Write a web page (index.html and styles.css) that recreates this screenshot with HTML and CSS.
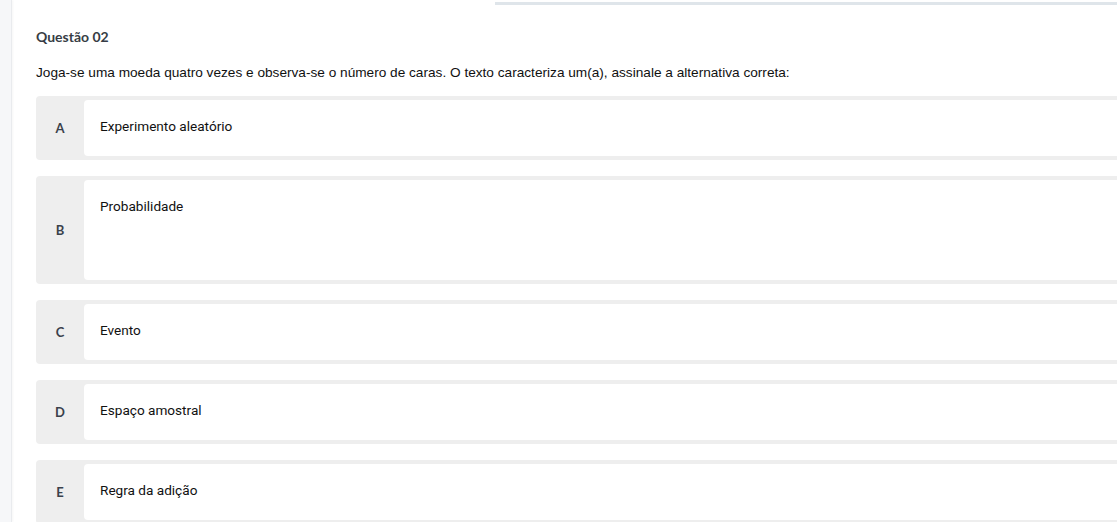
FILE: index.html
```html
<!DOCTYPE html>
<html lang="pt-BR">
<head>
<meta charset="utf-8">
<link rel="stylesheet" href="styles.css">
<title>Questão 02</title>
</head>
<body>
<div class="page">
  <aside class="rail"></aside>
  <main class="main">
    <div class="topbar"></div>
    <section class="question">
      <h2 class="q-title">Questão 02</h2>
      <p class="q-text">Joga-se uma moeda quatro vezes e observa-se o número de caras. O texto caracteriza um(a), assinale a alternativa correta:</p>
      <ul class="options">
        <li class="option"><span class="letter">A</span><div class="answer">Experimento aleatório</div></li>
        <li class="option"><span class="letter">B</span><div class="answer answer-tall">Probabilidade</div></li>
        <li class="option"><span class="letter">C</span><div class="answer">Evento</div></li>
        <li class="option"><span class="letter">D</span><div class="answer">Espaço amostral</div></li>
        <li class="option"><span class="letter">E</span><div class="answer">Regra da adição</div></li>
      </ul>
    </section>
  </main>
</div>
</body>
</html>
```

FILE: styles.css
```css
html, body {
  margin: 0;
  padding: 0;
  background: #ffffff;
  overflow: hidden;
  height: 522px;
}

.page {
  display: flex;
  height: 522px;
}

.rail {
  flex: 0 0 11px;
  background: #f6f7f9;
  border-right: 1px solid #e9ebee;
  box-shadow: 1px 0 2px rgba(0, 0, 0, 0.04);
}

.main {
  flex: 1 1 auto;
  position: relative;
  min-width: 0;
}

.topbar {
  height: 3px;
  margin: 2px 0 0 483px;
  background: #dfe5ea;
}

.question {
  padding: 22px 0 0 24px;
  width: 1120px;
}

.q-title {
  margin: 0;
  font-family: Lato, "Open Sans", sans-serif;
  font-weight: 700;
  font-size: 14px;
  line-height: 20px;
  color: #373d45;
}

.q-text {
  margin: 17px 0 0;
  font-family: "Liberation Sans", Arial, sans-serif;
  font-size: 13.65px;
  line-height: 18px;
  color: #111111;
}

.options {
  list-style: none;
  margin: 14px 0 0;
  padding: 0;
  display: flex;
  flex-direction: column;
  gap: 16px;
}

.option {
  display: flex;
  align-items: stretch;
  background: #eeeeee;
  border-radius: 4px;
  padding: 4px 0;
}

.letter {
  flex: 0 0 48px;
  display: flex;
  align-items: center;
  justify-content: center;
  font-family: Lato, "Open Sans", sans-serif;
  font-weight: 700;
  font-size: 13px;
  color: #3a414b;
}

.answer {
  flex: 1 1 auto;
  background: #ffffff;
  border-radius: 4px;
  min-height: 56px;
  box-sizing: border-box;
  padding: 17px 16px 0;
  font-family: Roboto, "Liberation Sans", sans-serif;
  font-size: 13.6px;
  line-height: 18px;
  color: #111111;
}

.answer-tall {
  min-height: 100px;
}
```
